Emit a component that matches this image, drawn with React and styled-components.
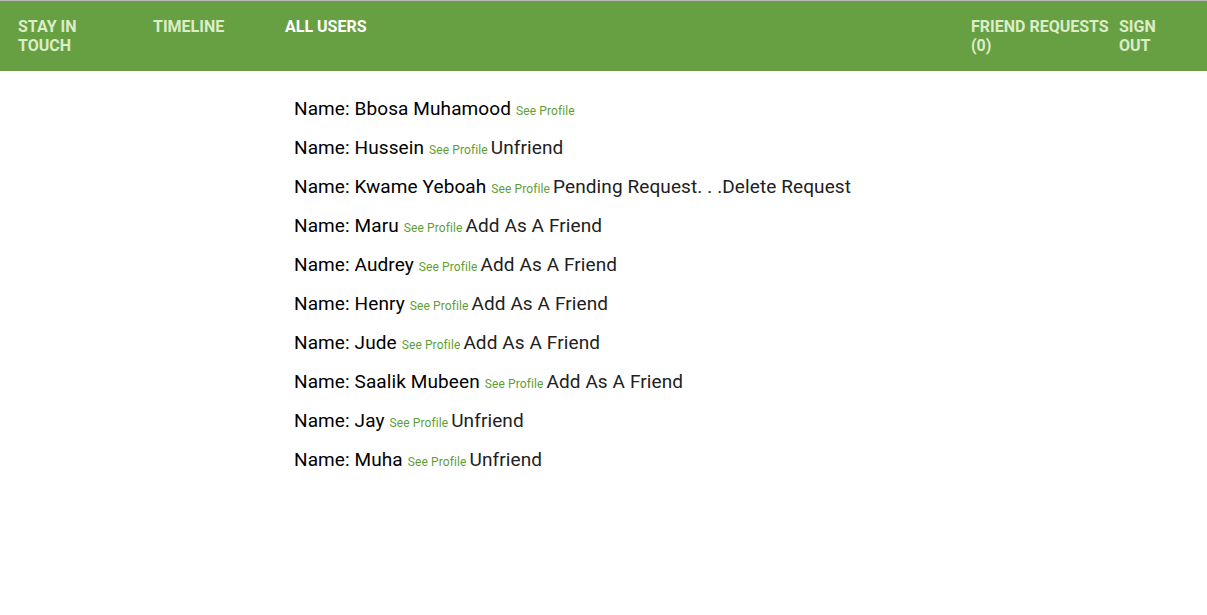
import React from "react";
import styled, { createGlobalStyle } from "styled-components";

const Global = createGlobalStyle`
  html, body { margin: 0; padding: 0; background: #fff; }
  body { font-family: Roboto, "Liberation Sans", sans-serif; }
`;

const Nav = styled.nav`
  display: grid;
  grid-template-columns: 135px 132px 1fr 148px 88px;
  align-items: start;
  padding: 16px 0 0 18px;
  box-sizing: border-box;
  background: #67a042;
  border-top: 1px solid #b5b5b5;
  height: 71px;
`;

const NavLink = styled.a`
  font-family: Roboto, "Liberation Sans", sans-serif;
  font-weight: 700;
  font-size: 16px;
  line-height: 19px;
  text-transform: uppercase;
  color: ${(p) => (p.$active ? "#ffffff" : "#dcedc8")};
  text-decoration: none;
  width: ${(p) => p.$w || "auto"};
  cursor: pointer;
`;

const List = styled.ul`
  list-style: none;
  margin: 0;
  padding: 18px 0 0 294px;
`;

const Row = styled.li`
  font-size: 19px;
  letter-spacing: 0.1px;
  line-height: 39px;
  height: 39px;
  color: #000;
  white-space: nowrap;
`;

const Profile = styled.a`
  font-size: 12px;
  letter-spacing: 0.1px;
  color: #5e9e34;
  margin: 0 3px 0 5px;
  text-decoration: none;
`;

const Action = styled.span`
  color: #212121;
`;

const users = [
  ["Bbosa Muhamood", ""],
  ["Hussein", "Unfriend"],
  ["Kwame Yeboah", "Pending Request. . .Delete Request"],
  ["Maru", "Add As A Friend"],
  ["Audrey", "Add As A Friend"],
  ["Henry", "Add As A Friend"],
  ["Jude", "Add As A Friend"],
  ["Saalik Mubeen", "Add As A Friend"],
  ["Jay", "Unfriend"],
  ["Muha", "Unfriend"],
];

export default function App() {
  return (
    <>
      <Global />
      <Nav>
        <NavLink $w="70px">Stay in touch</NavLink>
        <NavLink>Timeline</NavLink>
        <NavLink $active>All users</NavLink>
        <NavLink>Friend requests (0)</NavLink>
        <NavLink $w="40px">Sign out</NavLink>
      </Nav>
      <List>
        {users.map(([name, action]) => (
          <Row key={name}>
            Name: {name}
            <Profile>See Profile</Profile>
            {action && <Action>{action}</Action>}
          </Row>
        ))}
      </List>
    </>
  );
}
